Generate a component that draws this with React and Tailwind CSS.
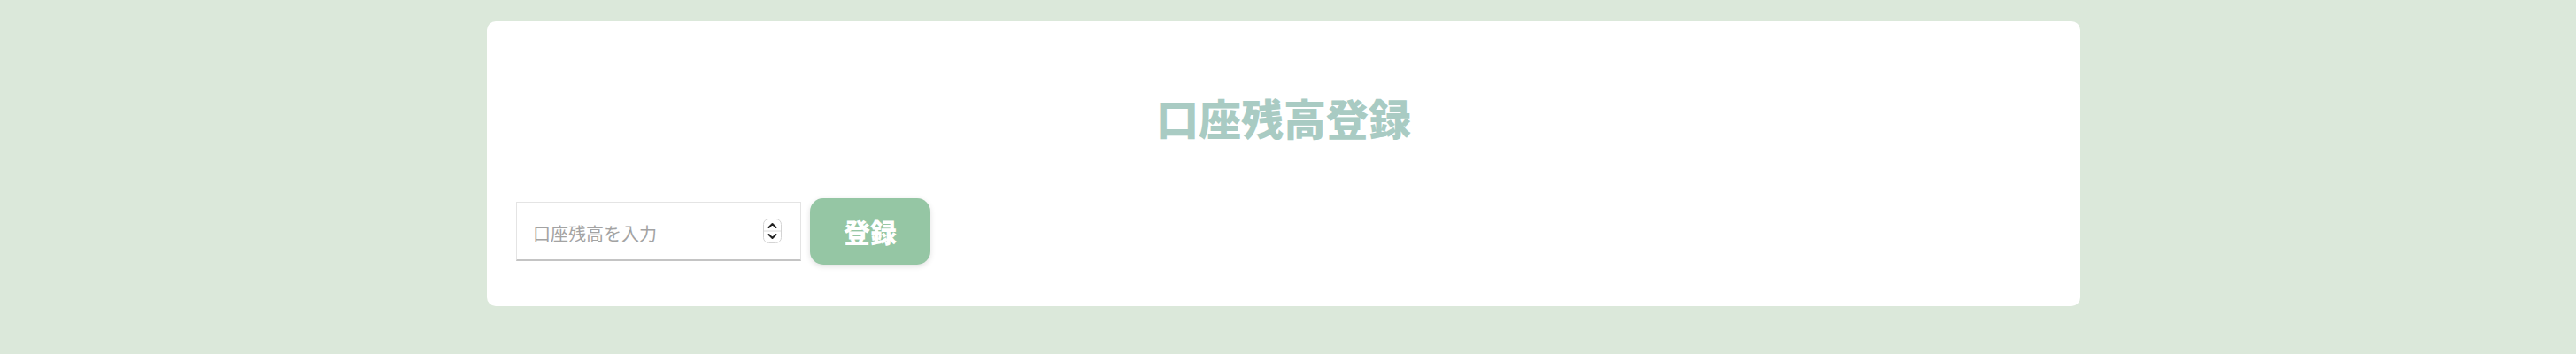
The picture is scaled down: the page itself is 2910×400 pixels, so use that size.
import { useState } from "react";

const FONT = '"Noto Sans CJK JP", "Noto Sans", sans-serif';

function Spinner() {
  return (
    <svg width="21" height="28" viewBox="0 0 21 28" className="shrink-0">
      <rect x="0.5" y="0.5" width="20" height="27" rx="6" fill="#fff" stroke="#d4d4d4" />
      <line x1="1" y1="14" x2="20" y2="14" stroke="#dcdcdc" />
      <path d="M6.5 10 L10.5 6 L14.5 10" fill="none" stroke="#222" strokeWidth="2" strokeLinecap="round" strokeLinejoin="round" />
      <path d="M6.5 18 L10.5 22 L14.5 18" fill="none" stroke="#222" strokeWidth="2" strokeLinecap="round" strokeLinejoin="round" />
    </svg>
  );
}

export default function App() {
  const [balance, setBalance] = useState("");

  return (
    <div className="flex min-h-[400px] justify-center bg-[#dbe8da] pt-6 pr-[10px]" style={{ fontFamily: FONT }}>
      <div className="h-fit w-[1800px] rounded-[10px] bg-white px-[33px] pt-[84px] pb-[47px]">
        <h1 className="text-center text-[48px] font-black leading-[48px] text-[#a9cbc3]">
          口座残高登録
        </h1>

        <div className="mt-[68px] flex items-center gap-[10px]">
          {/* 入力欄 */}
          <div className="flex h-[67px] w-[322px] items-center border border-[#e4e4e4] border-b-2 border-b-[#c4c4c4] bg-white pl-[18px] pr-[21px]">
            <input
              type="text"
              inputMode="numeric"
              value={balance}
              onChange={(e) => setBalance(e.target.value)}
              placeholder="口座残高を入力"
              className="min-w-0 flex-1 bg-transparent pt-[6px] text-[20px] text-[#333] outline-none placeholder:text-[#a3a3a3]"
              style={{ fontFamily: FONT }}
            />
            <Spinner />
          </div>

          <button
            className="h-[75px] w-[136px] rounded-[15px] bg-[#95c6a4] text-[30px] font-black text-white shadow-[0_2px_6px_rgba(0,0,0,0.12)]"
            style={{ fontFamily: FONT }}
          >
            登録
          </button>
        </div>
      </div>
    </div>
  );
}
